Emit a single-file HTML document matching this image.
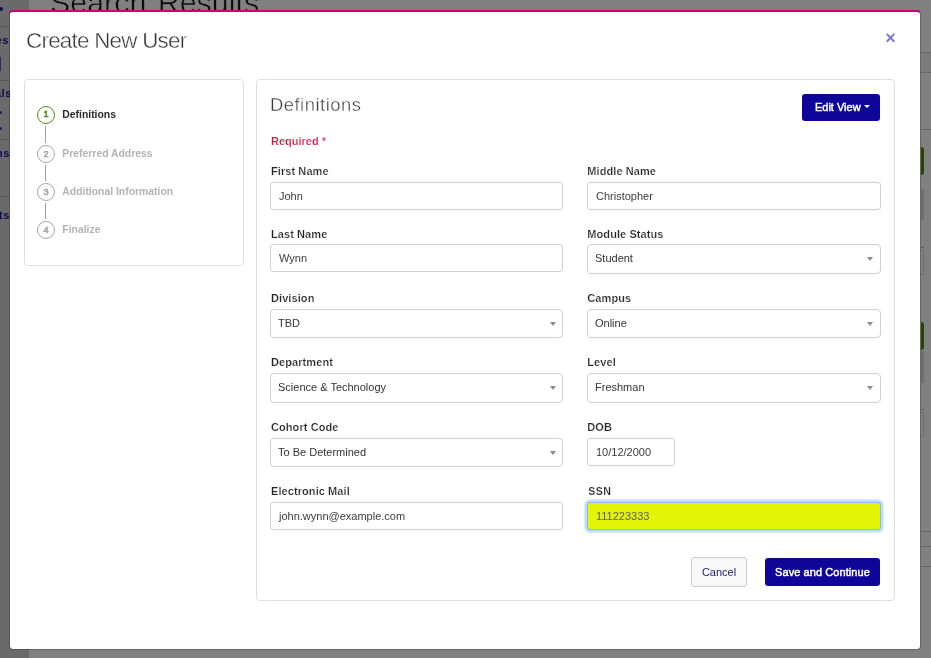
<!DOCTYPE html>
<html lang="en">
<head>
<meta charset="utf-8">
<title>Create New User</title>
<style>
*{box-sizing:border-box;margin:0;padding:0}
html,body{width:931px;height:658px;overflow:hidden}
body{position:relative;background:#808080;font-family:"Liberation Sans",Arial,sans-serif;font-size:11px;color:#444}
.abs{position:absolute}
#layer{position:absolute;left:0;top:0;width:931px;height:658px;will-change:transform}
/* background page (dimmed) */
#side{left:0;top:0;width:29px;height:658px;background:#6a6a6a}
.sline{left:0;width:29px;height:1px;background:#585858}
.stxt{color:#0a0a55;font-size:11px;font-weight:bold;letter-spacing:.6px;white-space:nowrap;text-align:right;width:29px;left:-19px;line-height:12px}
#bgtitle{left:50px;top:-15px;word-spacing:3px;font-size:30.4px;line-height:35px;color:#0c0c0c;white-space:nowrap;-webkit-text-stroke:.55px #808080}
.rline{left:921px;width:10px;height:1px;background:#666}
.pill{left:921px;width:3px;background:#284400;border-radius:0 3px 3px 0}
.gbar{left:921px;width:3px;background:#6e6e6e}
.tick{left:921px;width:3px;height:1px;background:#5c5c5c}
.obox{left:920px;width:4px;height:25px;border:1px solid #6c6c6c;border-left:0;border-radius:0 2px 2px 0}
/* modal */
#modal{left:9px;top:10px;width:912px;height:640px;background:#fff;background-clip:padding-box;border:1px solid rgba(0,0,0,.2);border-top:2px solid #cc0078;border-radius:4px}
#title{left:26px;top:28px;font-size:22.4px;line-height:26px;color:#333;letter-spacing:-.75px;white-space:nowrap;-webkit-text-stroke:.42px #fff}
#close{left:883.5px;top:27px;width:14px;height:22px;font-size:18px;line-height:22px;font-weight:bold;color:#7c7ac9;text-align:center}
.card{background:#fff;border:1px solid #dcdfe3;border-radius:4px}
#c1{left:24px;top:79px;width:220px;height:187px}
#c2{left:256px;top:79px;width:639px;height:522px}
.circ{left:37px;width:18px;height:18px;border:1px solid #a6a6a6;border-radius:50%;font-size:9.2px;line-height:16.6px;text-align:center;color:#a6a6a6;-webkit-text-stroke:.6px #a6a6a6}
.circ.on{border:1.9px solid #4f8f14;color:#4c8c12;line-height:14.8px;-webkit-text-stroke:.55px #4c8c12}
.vline{left:45px;width:1px;height:18px;background:#a0a0a0}
.step{left:62.3px;font-size:10.4px;font-weight:bold;line-height:12px;color:#b3b3b3;white-space:nowrap}
.step.on{color:#2b2b2b}
#h2{left:270px;top:94px;font-size:18.4px;line-height:22px;color:#3a3a3a;letter-spacing:.5px;white-space:nowrap;-webkit-text-stroke:.36px #fff}
#req{left:271px;top:135px;font-size:11px;font-weight:bold;line-height:13px;color:#d8103f;white-space:nowrap;-webkit-text-stroke:.2px #fff}
.lbl{font-size:11px;font-weight:bold;line-height:13px;color:#242424;white-space:nowrap;letter-spacing:.08px;-webkit-text-stroke:.22px #fff}
.inp{height:28px;border:1px solid #cfcfcf;border-radius:3px;background:#fff;padding:0 8px;font-size:11px;line-height:26px;color:#3c3c3c;white-space:nowrap}
.sel{height:30px;border:1px solid #cfcfcf;border-radius:4px;background:#fff;padding:0 7px;font-size:11px;line-height:26px;color:#333;white-space:nowrap}
.sel:after{content:"";position:absolute;right:6px;top:50%;margin-top:-2px;border-style:solid;border-width:4px 3px 0 3px;border-color:#8a8a8a transparent transparent transparent}
.h29{height:29px}
.R.sel:after{right:7px}
.L{left:270px;width:293px}
.R{left:587px;width:294px}
.ll{left:271px}
.rl{left:587.3px}
#ssn{background:#e3f504;border-color:#80bdff;box-shadow:0 0 0 2.5px rgba(0,123,255,.25);color:#5c5c7e}
.btn{border-radius:3px;font-size:11px;text-align:center;white-space:nowrap}
.pri{background:#0f0699;color:#fff;-webkit-text-stroke:.45px #fff}
#cancel{left:691px;top:557px;width:56px;height:30px;line-height:28px;border:1px solid #ccc;background:#f9f9f9;color:#1b1b6e}
#save{left:765px;top:558px;width:115px;height:28px;line-height:28px}
#edit{left:802px;top:94px;width:78px;height:27px;line-height:27px;padding-right:6.5px}
#edit:after{content:"";position:absolute;left:61.5px;top:11px;border-style:solid;border-width:3px 3px 0 3px;border-color:#fff transparent transparent transparent}
</style>
</head>
<body>
<div id="layer">
<!-- dimmed page behind -->
<div id="bgtitle" class="abs">Search Results</div>
<div id="side" class="abs"></div>
<div class="abs sline" style="top:26px"></div>
<div class="abs sline" style="top:80px"></div>
<div class="abs sline" style="top:139px"></div>
<div class="abs sline" style="top:196px"></div>
<div class="abs stxt" style="top:34px;left:-20px">es</div>
<div class="abs" style="left:0;top:57px;width:1px;height:14px;background:#2a2a66"></div>
<div class="abs stxt" style="top:87px;left:-17px">als</div>
<div class="abs" style="left:-1px;top:111px;width:3px;height:3px;border-radius:2px;background:#1c1c60"></div>
<div class="abs" style="left:-1px;top:127px;width:3px;height:3px;border-radius:2px;background:#1c1c60"></div>
<div class="abs" style="left:-1.5px;top:7px;width:4px;height:4px;border-radius:2px;background:#0a0a55"></div>
<div class="abs stxt" style="top:147px">ns</div>
<div class="abs stxt" style="top:209px">ts</div>
<div class="abs" style="left:921px;top:52px;width:10px;height:21px;background:#7b7b7b"></div>
<div class="abs rline" style="top:52px"></div>
<div class="abs rline" style="top:72px"></div>
<div class="abs rline" style="top:129px"></div>
<div class="abs pill" style="top:147px;height:28px"></div>
<div class="abs gbar" style="top:189px;height:31px"></div>
<div class="abs pill" style="top:322px;height:28px"></div>
<div class="abs gbar" style="top:351px;height:32px"></div>
<div class="abs tick" style="top:247px"></div>
<div class="abs obox" style="top:250px"></div>
<div class="abs tick" style="top:409px"></div>
<div class="abs obox" style="top:412px"></div>
<div class="abs rline" style="top:531px"></div>
<div class="abs rline" style="top:546px"></div>
<div class="abs rline" style="top:566px"></div>

<!-- modal -->
<div id="modal" class="abs"></div>
<div id="title" class="abs">Create New User</div>
<div id="close" class="abs">×</div>

<div id="c1" class="abs card"></div>
<div class="abs vline" style="top:126px;height:17px"></div>
<div class="abs vline" style="top:165px;height:16px"></div>
<div class="abs vline" style="top:203px;height:16px"></div>
<div class="abs circ on" style="top:106px">1</div>
<div class="abs circ" style="top:145px">2</div>
<div class="abs circ" style="top:183px">3</div>
<div class="abs circ" style="top:221px">4</div>
<div class="abs step on" style="top:109px">Definitions</div>
<div class="abs step" style="top:148.4px">Preferred Address</div>
<div class="abs step" style="top:186.4px">Additional Information</div>
<div class="abs step" style="top:224.4px">Finalize</div>

<div id="c2" class="abs card"></div>
<div id="h2" class="abs">Definitions</div>
<div id="edit" class="abs btn pri">Edit View</div>
<div id="req" class="abs">Required *</div>

<div class="abs lbl ll" style="top:165px">First Name</div>
<div class="abs inp L" style="top:182px">John</div>
<div class="abs lbl rl" style="top:165px">Middle Name</div>
<div class="abs inp R" style="top:182px">Christopher</div>

<div class="abs lbl ll" style="top:228px">Last Name</div>
<div class="abs inp L" style="top:244px">Wynn</div>
<div class="abs lbl rl" style="top:228px">Module Status</div>
<div class="abs sel R" style="top:244px">Student</div>

<div class="abs lbl ll" style="top:292px">Division</div>
<div class="abs sel L h29" style="top:309px">TBD</div>
<div class="abs lbl rl" style="top:292px">Campus</div>
<div class="abs sel R h29" style="top:309px">Online</div>

<div class="abs lbl ll" style="top:356px">Department</div>
<div class="abs sel L" style="top:373px">Science &amp; Technology</div>
<div class="abs lbl rl" style="top:356px">Level</div>
<div class="abs sel R" style="top:373px">Freshman</div>

<div class="abs lbl ll" style="top:421px">Cohort Code</div>
<div class="abs sel L h29" style="top:438px">To Be Determined</div>
<div class="abs lbl rl" style="top:421px">DOB</div>
<div class="abs inp" style="left:587px;top:438px;width:88px">10/12/2000</div>

<div class="abs lbl ll" style="top:485px">Electronic Mail</div>
<div class="abs inp L" style="top:502px">john.wynn@example.com</div>
<div class="abs lbl rl" style="top:485px;left:588.2px;letter-spacing:.5px;font-size:10.6px">SSN</div>
<div id="ssn" class="abs inp R" style="top:502px">111223333</div>

<div id="cancel" class="abs btn">Cancel</div>
<div id="save" class="abs btn pri" style="letter-spacing:.08px">Save and Continue</div>
</div>
</body>
</html>
